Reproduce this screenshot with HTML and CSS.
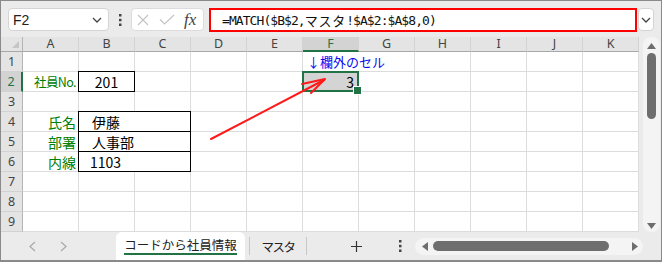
FILE: index.html
```html
<!DOCTYPE html>
<html lang="ja">
<head>
    <meta charset="UTF-8">
    <meta name="viewport" content="width=device-width, initial-scale=1.0">
    <title>コードから社員情報</title>
    <link rel="stylesheet" href="styles.css">
</head>
<body>

<div class="app">
    <!-- Formula Bar -->
    <div class="formula-bar">
        <div class="name-box">
            <span>F2</span>
            <svg width="10" height="6" viewBox="0 0 10 6"><path d="M1 1 L5 5 L9 1" fill="none" stroke="#444" stroke-width="1.3"/></svg>
        </div>
        <div class="bar-dots">
            <svg width="3" height="12" viewBox="0 0 3 12"><rect x="0" y="0" width="2.5" height="2.5" fill="#444"/><rect x="0" y="4.8" width="2.5" height="2.5" fill="#444"/><rect x="0" y="9.5" width="2.5" height="2.5" fill="#444"/></svg>
        </div>
        <div class="fx-box">
            <svg class="cancel" width="12" height="12" viewBox="0 0 12 12"><path d="M1 1 L11 11 M11 1 L1 11" stroke="#c4c4c4" stroke-width="1.2"/></svg>
            <svg class="enter" width="16" height="11" viewBox="0 0 16 11"><path d="M1 5.5 L5.5 10 L15 1" fill="none" stroke="#c4c4c4" stroke-width="1.2"/></svg>
            <span class="fx">fx</span>
        </div>
        <div class="formula">=MATCH($B$2,<span class="jp">マスタ</span>!$A$2:$A$8,0)</div>
        <div class="expand">
            <svg width="10" height="6" viewBox="0 0 10 6"><path d="M1 1 L5 5 L9 1" fill="none" stroke="#444" stroke-width="1.3"/></svg>
        </div>
    </div>

    <!-- Sheet -->
    <div class="main">
        <div class="sheet">
            <div class="corner"><span class="corner-mark"></span></div>
            <div class="col-h">A</div>
            <div class="col-h">B</div>
            <div class="col-h">C</div>
            <div class="col-h">D</div>
            <div class="col-h">E</div>
            <div class="col-h active">F</div>
            <div class="col-h">G</div>
            <div class="col-h">H</div>
            <div class="col-h">I</div>
            <div class="col-h">J</div>
            <div class="col-h">K</div>

            <div class="row-h">1</div>
            <div class="cell"></div><div class="cell"></div><div class="cell"></div><div class="cell"></div><div class="cell"></div>
            <div class="cell span2 note">↓欄外のセル</div>
            <div class="cell"></div><div class="cell"></div><div class="cell"></div><div class="cell"></div>

            <div class="row-h active">2</div>
            <div class="cell label short">社員No.</div>
            <div class="cell boxed center">201</div>
            <div class="cell"></div><div class="cell"></div><div class="cell"></div>
            <div class="cell selected">3</div>
            <div class="cell"></div><div class="cell"></div><div class="cell"></div><div class="cell"></div><div class="cell"></div>

            <div class="row-h">3</div>
            <div class="cell"></div><div class="cell"></div><div class="cell"></div><div class="cell"></div><div class="cell"></div><div class="cell"></div>
            <div class="cell"></div><div class="cell"></div><div class="cell"></div><div class="cell"></div><div class="cell"></div>

            <div class="row-h">4</div>
            <div class="cell label">氏名</div>
            <div class="cell boxed span2 indent">伊藤</div>
            <div class="cell"></div><div class="cell"></div><div class="cell"></div><div class="cell"></div>
            <div class="cell"></div><div class="cell"></div><div class="cell"></div><div class="cell"></div>

            <div class="row-h">5</div>
            <div class="cell label">部署</div>
            <div class="cell boxed span2 indent">人事部</div>
            <div class="cell"></div><div class="cell"></div><div class="cell"></div><div class="cell"></div>
            <div class="cell"></div><div class="cell"></div><div class="cell"></div><div class="cell"></div>

            <div class="row-h">6</div>
            <div class="cell label">内線</div>
            <div class="cell boxed span2 indent num">1103</div>
            <div class="cell"></div><div class="cell"></div><div class="cell"></div><div class="cell"></div>
            <div class="cell"></div><div class="cell"></div><div class="cell"></div><div class="cell"></div>

            <div class="row-h">7</div>
            <div class="cell"></div><div class="cell"></div><div class="cell"></div><div class="cell"></div><div class="cell"></div><div class="cell"></div>
            <div class="cell"></div><div class="cell"></div><div class="cell"></div><div class="cell"></div><div class="cell"></div>

            <div class="row-h">8</div>
            <div class="cell"></div><div class="cell"></div><div class="cell"></div><div class="cell"></div><div class="cell"></div><div class="cell"></div>
            <div class="cell"></div><div class="cell"></div><div class="cell"></div><div class="cell"></div><div class="cell"></div>

            <div class="row-h">9</div>
            <div class="cell"></div><div class="cell"></div><div class="cell"></div><div class="cell"></div><div class="cell"></div><div class="cell"></div>
            <div class="cell"></div><div class="cell"></div><div class="cell"></div><div class="cell"></div><div class="cell"></div>
        </div>

        <!-- Vertical Scrollbar -->
        <div class="vscroll">
            <div class="v-track">
                <svg width="9" height="6" viewBox="0 0 9 6"><polygon points="0,6 4.5,0 9,6" fill="#6d6d6d"/></svg>
                <div class="v-thumb"></div>
                <svg class="v-down" width="9" height="6" viewBox="0 0 9 6"><polygon points="0,0 9,0 4.5,6" fill="#6d6d6d"/></svg>
            </div>
        </div>
    </div>

    <!-- Sheet Tabs -->
    <div class="tabbar">
        <div class="tab-nav">
            <svg width="7" height="11" viewBox="0 0 7 11"><path d="M6 1 L1 5.5 L6 10" fill="none" stroke="#a8a8a8" stroke-width="1.2"/></svg>
            <svg width="7" height="11" viewBox="0 0 7 11"><path d="M1 1 L6 5.5 L1 10" fill="none" stroke="#a8a8a8" stroke-width="1.2"/></svg>
        </div>
        <div class="tab active"><span class="tab-label">コードから社員情報</span></div>
        <span class="sep"></span>
        <div class="tab plain">マスタ</div>
        <span class="sep"></span>
        <svg class="tab-add" width="11" height="11" viewBox="0 0 11 11"><path d="M5.5 0 V11 M0 5.5 H11" stroke="#333" stroke-width="1.2"/></svg>
        <svg class="tab-dots" width="3" height="12" viewBox="0 0 3 12"><rect x="0" y="0" width="2.5" height="2.5" fill="#444"/><rect x="0" y="4.8" width="2.5" height="2.5" fill="#444"/><rect x="0" y="9.5" width="2.5" height="2.5" fill="#444"/></svg>
        <div class="hscroll">
            <svg width="6" height="9" viewBox="0 0 6 9"><polygon points="6,0 0,4.5 6,9" fill="#6d6d6d"/></svg>
            <div class="h-thumb"></div>
            <svg class="h-right" width="6" height="9" viewBox="0 0 6 9"><polygon points="0,0 6,4.5 0,9" fill="#6d6d6d"/></svg>
        </div>
    </div>

    <!-- Red arrow drawn over the sheet -->
    <svg class="arrow" width="662" height="262" viewBox="0 0 662 262">
        <path d="M211 139 L324 80" stroke="#ff1a1a" stroke-width="2" stroke-linecap="round" fill="none"/>
        <path d="M302 84 L325 79 L311 93" stroke="#ff1a1a" stroke-width="2" stroke-linecap="round" stroke-linejoin="round" fill="none"/>
    </svg>
</div>

</body>
</html>
```

FILE: styles.css
```css
/* General Page Styling */
* {
    box-sizing: border-box;
}

body {
    margin: 0;
    font-family: "Noto Sans CJK JP", sans-serif;
    background: #fff;
}

/* Window */
.app {
    position: relative;
    width: 662px;
    height: 262px;
    border: 1px solid #8a8a8a;
    border-bottom-width: 2px;
    background: #ebebeb;
    display: flex;
    flex-direction: column;
    overflow: hidden;
}

/* Formula Bar */
.formula-bar {
    height: 36px;
    flex: none;
    display: flex;
    align-items: flex-start;
    padding: 7px 0 0 7px;
}

.name-box {
    width: 101px;
    height: 23px;
    background: #fff;
    border: 1px solid #d4d4d4;
    border-radius: 4px;
    display: flex;
    align-items: center;
    justify-content: space-between;
    padding: 0 6px 0 4px;
    font: 14px "Liberation Sans", sans-serif;
    color: #222;
}

.bar-dots {
    width: 22px;
    height: 23px;
    display: flex;
    align-items: center;
    justify-content: center;
}

.fx-box {
    width: 73px;
    height: 23px;
    background: #fff;
    border: 1px solid #dcdcdc;
    border-radius: 4px;
    display: flex;
    align-items: center;
    padding-left: 5px;
}

.fx-box .enter {
    margin-left: 10px;
}

.fx {
    margin-left: 9px;
    font: italic 17px "Liberation Serif", serif;
    color: #444;
    line-height: 20px;
}

.formula {
    width: 428px;
    height: 24px;
    margin-left: 5px;
    border: 2px solid #ff0000;
    background: #fff;
    padding-left: 11px;
    font: 13px "DejaVu Sans Mono", "Noto Sans CJK JP", monospace;
    letter-spacing: -0.93px;
    color: #111;
    display: flex;
    align-items: center;
    white-space: nowrap;
}

.formula .jp {
    font-family: "Noto Sans CJK JP", sans-serif;
    letter-spacing: 0.8px;
}

.expand {
    width: 16px;
    height: 23px;
    margin-left: 1px;
    background: #fff;
    border: 1px solid #d4d4d4;
    border-radius: 4px;
    display: flex;
    align-items: center;
    justify-content: center;
}

/* Sheet Grid */
.main {
    display: flex;
    height: 195px;
    flex: none;
}

.sheet {
    width: 638px;
    display: grid;
    grid-template-columns: 22px repeat(11, 56px);
    grid-template-rows: 15px repeat(9, 20px);
    background: #fff;
}

.corner {
    background: #e4e4e4;
    border-right: 1px solid #b4b4b4;
    border-bottom: 1px solid #a8a8a8;
    display: flex;
    align-items: flex-end;
    justify-content: flex-end;
    padding: 0 3px 3px 0;
}

.corner-mark {
    width: 0;
    height: 0;
    border-left: 7px solid transparent;
    border-bottom: 7px solid #c6c6c6;
}

.col-h {
    background: #e4e4e4;
    border-right: 1px solid #d2d2d2;
    border-bottom: 1px solid #a8a8a8;
    display: flex;
    align-items: center;
    justify-content: center;
    font: 12.5px "Noto Sans", sans-serif;
    line-height: 14px;
    color: #444;
}

.col-h.active {
    background: #d3d3d3;
    color: #217346;
    border-bottom: 2px solid #217346;
}

.row-h {
    background: #e4e4e4;
    border-right: 1px solid #b4b4b4;
    border-bottom: 1px solid #d2d2d2;
    display: flex;
    align-items: center;
    justify-content: center;
    font: 12.5px "Noto Sans", sans-serif;
    color: #444;
}

.row-h.active {
    background: #d3d3d3;
    color: #217346;
    border-right: 2px solid #217346;
}

/* Cells */
.cell {
    border-right: 1px solid #dcdcdc;
    border-bottom: 1px solid #dcdcdc;
    display: flex;
    align-items: flex-end;
    padding: 0 3px;
    font-size: 14px;
    line-height: 18px;
    color: #000;
    white-space: nowrap;
}

.span2 {
    grid-column: span 2;
}

.label {
    justify-content: flex-end;
    padding-right: 2px;
    color: #008000;
}

.label.short {
    font-size: 12.5px;
    letter-spacing: -0.6px;
}

.boxed {
    border-right-color: #000;
    border-bottom-color: #000;
    box-shadow: -1px 0 #000, 0 -1px #000, -1px -1px #000;
}

.center {
    justify-content: center;
}

.indent {
    padding-left: 13px;
}

.indent.num {
    padding-left: 11px;
}

.note {
    color: #0a0af0;
    font-size: 13px;
    padding-left: 4px;
}

/* Active cell */
.selected {
    position: relative;
    background: #d4d4d4;
    justify-content: flex-end;
    padding-right: 4px;
}

.selected::before {
    content: "";
    position: absolute;
    left: -1px;
    top: -1px;
    right: -1px;
    bottom: -1px;
    border: 2px solid #217346;
}

.selected::after {
    content: "";
    position: absolute;
    right: -4px;
    bottom: -4px;
    width: 7px;
    height: 7px;
    background: #217346;
    border: 1px solid #fff;
}

/* Vertical Scrollbar */
.vscroll {
    width: 22px;
    padding: 0 1px 0 4px;
}

.v-track {
    height: 100%;
    background: #f4f4f4;
    border-radius: 8px;
    display: flex;
    flex-direction: column;
    align-items: center;
    padding: 6px 0 3px;
}

.v-thumb {
    width: 9px;
    height: 66px;
    margin-top: 4px;
    background: #6e6e6e;
    border-radius: 5px;
}

.v-down {
    margin-top: auto;
}

/* Sheet Tabs */
.tabbar {
    height: 28px;
    flex: none;
    display: flex;
    align-items: center;
}

.tab-nav {
    width: 115px;
    height: 28px;
    display: flex;
    align-items: center;
    gap: 24px;
    padding-left: 28px;
}

.tab {
    height: 28px;
    display: flex;
    justify-content: center;
    font-size: 12.5px;
    color: #222;
}

.tab.active {
    width: 129px;
    background: #fff;
    border-radius: 6px 6px 0 0;
    padding-top: 5px;
}

.tab-label {
    display: block;
    line-height: 15px;
    height: 18px;
    padding-bottom: 1px;
    border-bottom: 2px solid #217346;
}

.tab.plain {
    width: 56px;
    align-items: center;
    letter-spacing: -1.5px;
}

.sep {
    width: 1px;
    height: 18px;
    background: #c8c8c8;
    margin-left: 4px;
}

.tab.plain + .sep {
    margin-left: 0;
}

.tab-add {
    margin-left: 44px;
}

.tab-dots {
    margin-left: 37px;
}

.hscroll {
    width: 228px;
    height: 17px;
    margin-left: 13px;
    background: #f4f4f4;
    border-radius: 9px;
    display: flex;
    align-items: center;
    padding: 0 5px 0 7px;
}

.h-thumb {
    width: 176px;
    height: 10px;
    margin-left: 5px;
    background: #6e6e6e;
    border-radius: 5px;
}

.h-right {
    margin-left: auto;
}

/* Arrow overlay */
.arrow {
    position: absolute;
    left: -1px;
    top: -1px;
    pointer-events: none;
}
```
